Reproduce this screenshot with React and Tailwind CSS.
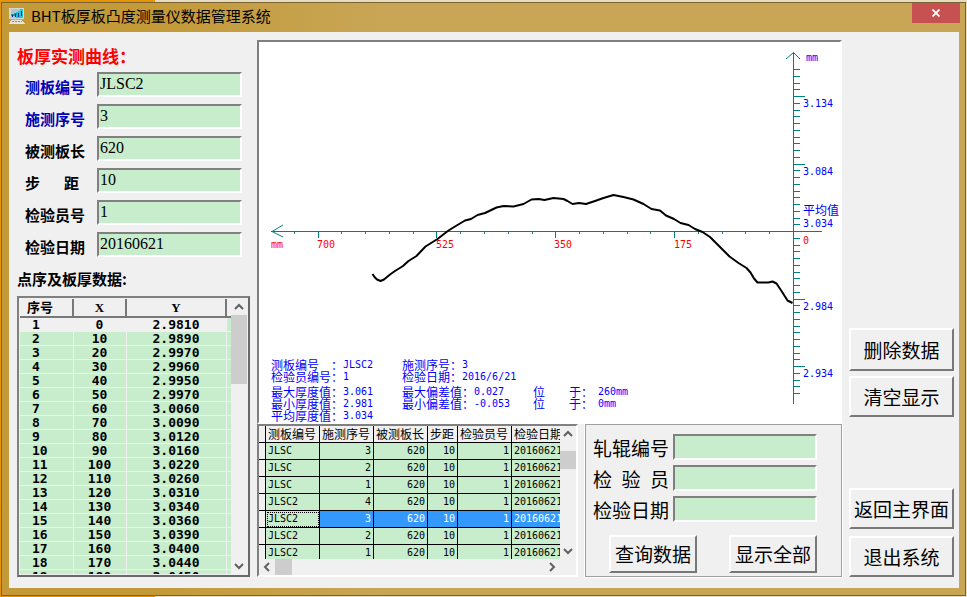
const CJK = 'font-["Noto_Sans_CJK_SC",sans-serif]';

const sunken =
  'border-2 border-t-[#808080] border-l-[#808080] border-r-white border-b-white';
const raised =
  'border-2 border-t-white border-l-white border-r-[#787878] border-b-[#787878]';

const fields = [
  { id: 'plate', label: ['测板编号'], value: 'JLSC2', blue: true },
  { id: 'seq', label: ['施测序号'], value: '3', blue: true },
  { id: 'length', label: ['被测板长'], value: '620' },
  { id: 'step', label: ['步', '距'], value: '10' },
  { id: 'inspector', label: ['检验员号'], value: '1' },
  { id: 'date', label: ['检验日期'], value: '20160621' },
];

const thickness = [
  '2.9810', '2.9890', '2.9970', '2.9960', '2.9950', '2.9970', '3.0060',
  '3.0090', '3.0120', '3.0160', '3.0220', '3.0260', '3.0310', '3.0340',
  '3.0360', '3.0390', '3.0400', '3.0440', '3.0450',
];

const records = [
  ['JLSC', 3], ['JLSC', 2], ['JLSC', 1], ['JLSC2', 4],
  ['JLSC2', 3], ['JLSC2', 2], ['JLSC2', 1],
];

const curve =
  'M372.5 274L374.5 277L377 279.5L380.5 281L384 279.5L390 274.5L395 271L403 266L408.5 261L416.5 256L425.5 246.5L437.5 239L448.5 230.5L455 226.5L465 220.5L471 219L477.5 215L485 213L496.5 207.5L503.5 206L513.5 206.5L523.5 204L531.5 199.5L538.5 199L544.5 200L553.5 198L563.5 199L567.5 201L572.5 204L579 203L586 204L595 201L603.5 198L613.5 195L623.5 197L633.5 199.5L643.5 204L651.5 209L660 210.5L666 215.5L674 219L680.5 223L688.5 225L695 229L702.5 232L710 237L720.5 247.5L729.5 256.5L738.5 263L746.5 268L750.5 272.5L754 278.5L757.5 282.5L768.5 282.5L772.5 281.5L776.5 283.5L781.5 291L787.5 300.5L792.5 303';

const yTicks = Array.from({ length: 49 }, (_, i) => i - 24).filter((k) => k !== 0);
const xTicks = Array.from({ length: 21 }, (_, i) => i + 1);

function Chevron({ dir }) {
  const d = {
    up: 'M1 7L5 3L9 7',
    down: 'M1 3L5 7L9 3',
    left: 'M7 1L3 5L7 9',
    right: 'M3 1L7 5L3 9',
  }[dir];
  return (
    <svg viewBox="0 0 10 10" className="h-[10px] w-[10px]" aria-hidden="true">
      <path d={d} fill="none" stroke="#606060" strokeWidth="2" />
    </svg>
  );
}

function VScroll({ thumb, gap }) {
  return (
    <div className="flex w-4 shrink-0 flex-col items-center bg-[#f0f0f0]">
      <button aria-label="向上" className="flex h-4 w-4 items-center justify-center"><Chevron dir="up" /></button>
      <div className={`w-full flex-1 ${gap}`}>
        <div className={`w-full bg-[#cdcdcd] ${thumb}`} />
      </div>
      <button aria-label="向下" className="flex h-4 w-4 items-center justify-center"><Chevron dir="down" /></button>
    </div>
  );
}

function TitleBar() {
  return (
    <header className="flex h-[29px] shrink-0 items-start">
      <svg viewBox="0 0 16 16" className="mt-[5px] h-4 w-4" shapeRendering="crispEdges" aria-hidden="true">
        <rect x="0" y="0" width="15" height="11" fill="#d4d8d4" />
        <rect x="2" y="1" width="12" height="9" fill="#b4c4c8" />
        <path d="M7 4H9V3H11V1H14V10H7Z" fill="#20c8d8" />
        <path d="M2 6H5V5H8V7H6V8H2Z" fill="#109cb0" />
        <path d="M3 9V7M6 9V6M9 9V5M12 8V3" stroke="#10309c" fill="none" />
        <rect x="3" y="11" width="10" height="1" fill="#a8b0b0" />
        <path d="M2 12H13L16 16H0Z" fill="#e2e6e2" />
        <path d="M3 13.5H13" stroke="#28b0b8" strokeDasharray="2 1" />
      </svg>
      <h1 className="ml-[6px] flex-1 text-[15px] leading-[26px] text-black">BHT板厚板凸度测量仪数据管理系统</h1>
      <button aria-label="关闭" className="-mr-px flex h-5 w-12 items-center justify-center bg-[#c75050]">
        <svg viewBox="0 0 8 8" className="h-2 w-2" aria-hidden="true">
          <path d="M0.5 0.5L7.5 7.5M7.5 0.5L0.5 7.5" stroke="#fff" strokeWidth="1.8" />
        </svg>
      </button>
    </header>
  );
}

function PointTable() {
  return (
    <div className="flex h-[281px] border-2 border-[#808080] border-r-[#696969] border-b-[#696969] bg-[#f0f0f0] p-px">
      <div className="flex-1 overflow-hidden">
        <table className="w-full table-fixed border-collapse font-['DejaVu_Sans_Mono','Noto_Sans_CJK_SC',monospace] text-[13px] font-bold">
          <colgroup>
            <col className="w-[53px]" /><col className="w-[53px]" /><col className="w-[100px]" /><col />
          </colgroup>
          <thead>
            <tr className="h-[18px] leading-4">
              {['序号', 'X', 'Y', ''].map((h, i) => (
                <th key={i} className="border-r-2 border-b-2 border-[#787878] p-0 text-center font-['Liberation_Serif','Noto_Sans_CJK_SC',serif] last:border-r-0">
                  <div className={i === 0 ? 'pr-3' : ''}>{h}</div>
                </th>
              ))}
            </tr>
          </thead>
          <tbody>
            {thickness.map((y, i) => (
              <tr key={y + i} className={`h-[14px] leading-[13px] ${i === 0 ? 'bg-[#f0f0f0]' : 'bg-[#c8edcc]'}`}>
                <td className="border-r border-b border-[#f0f0f0] p-0 pl-3">{i + 1}</td>
                <td className="border-r border-b border-[#f0f0f0] p-0 text-center">{i * 10}</td>
                <td className="border-r border-b border-[#f0f0f0] p-0 text-center">{y}</td>
                <td className="border-b border-[#f0f0f0] bg-[#c8edcc] p-0" />
              </tr>
            ))}
          </tbody>
        </table>
      </div>
      <VScroll gap="pt-0" thumb="h-[69px]" />
    </div>
  );
}

function LeftPanel() {
  return (
    <section className="flex w-[233px] shrink-0 flex-col pt-3">
      <h2 className="text-[17px] leading-6 font-bold text-[#ff0000]">板厚实测曲线：</h2>
      <div className="mt-1 flex flex-col gap-[7px] pr-2 pl-2">
        {fields.map((f) => (
          <div key={f.id} className="flex h-[25px] gap-3">
            <label
              htmlFor={f.id}
              className={`flex w-15 justify-between pt-[5px] text-[15px] leading-5 font-bold ${f.label.length > 1 ? 'pr-[6px]' : ''} ${f.blue ? 'text-[#0000b4]' : 'text-black'}`}
            >
              {f.label.map((t) => <span key={t}>{t}</span>)}
            </label>
            <input
              id={f.id}
              defaultValue={f.value}
              className={`min-w-0 flex-1 bg-[#c8edcc] px-px pb-[2px] font-['Liberation_Serif',serif] text-base leading-5 outline-none ${sunken}`}
            />
          </div>
        ))}
      </div>
      <h3 className="mt-3 mb-[7px] text-[15px] leading-5 font-bold text-black">点序及板厚数据:</h3>
      <PointTable />
    </section>
  );
}

function Note({ label, value }) {
  return (
    <span className="flex">
      <span className={label.length > 1 ? 'flex w-18 justify-between' : ''}>
        {label.map((t) => <span key={t}>{t}</span>)}
      </span>
      <span className="font-['DejaVu_Sans_Mono',monospace] text-[10px]">{value}</span>
    </span>
  );
}

function Place({ value }) {
  return (
    <span className="flex">
      <span className="w-9">位</span><span className="w-[29px]">于：</span>
      <span className="font-['DejaVu_Sans_Mono',monospace] text-[10px]">{value}</span>
    </span>
  );
}

function Chart() {
  return (
    <section className={`relative h-[384px] bg-white ${sunken}`}>
      <svg viewBox="259 42 581 380" className="h-full w-full" role="img" aria-label="板厚实测曲线">
        <g stroke="#008080" strokeWidth="1" fill="none" shapeRendering="crispEdges">
          <path d="M793.5 52V404M271 231.5H822" />
          {yTicks.map((k) => {
            const y = Math.round(231 + k * 6.75) + 0.5;
            return <path key={k} d={`M793 ${y}H${k % 10 === 0 ? 805 : 800}`} />;
          })}
          {xTicks.map((k) => {
            const x = Math.round(793 - k * 23.77) + 0.5;
            return <path key={k} d={`M${x} 231V${k % 5 === 0 ? 238 : 234}`} />;
          })}
        </g>
        <path d="M786 59L793.5 52.5L800 59M283 225L272 231.5L283 237" stroke="#008080" fill="none" />
        <path d={curve} fill="none" stroke="#000" strokeWidth="2" strokeLinejoin="round" />
        <g className="font-['DejaVu_Sans_Mono',monospace] text-[10px]" fill="#ff0000">
          <text x="271" y="248">mm</text>
          <text x="317" y="248">700</text>
          <text x="436" y="248">525</text>
          <text x="554" y="248">350</text>
          <text x="674" y="248">175</text>
          <text x="803" y="244">0</text>
        </g>
        <g className="font-['DejaVu_Sans_Mono',monospace] text-[10px]" fill="#0000ff">
          <text x="806" y="61">mm</text>
          <text x="803" y="107">3.134</text>
          <text x="803" y="175">3.084</text>
          <text x="803" y="215" className={`text-xs ${CJK}`}>平均值</text>
          <text x="803" y="227">3.034</text>
          <text x="803" y="310">2.984</text>
          <text x="803" y="377">2.934</text>
        </g>
      </svg>
      <div className="absolute bottom-0 left-3 grid grid-cols-[131px_131px_auto] text-xs leading-3 text-[#0000ff]">
        <Note label={['测板编号', '：']} value="JLSC2" />
        <Note label={['施测序号：']} value="3" />
        <span />
        <div className="pb-[3px]"><Note label={['检验员编号：']} value="1" /></div>
        <Note label={['检验日期：']} value="2016/6/21" />
        <span />
        <Note label={['最大厚度值：']} value="3.061" />
        <Note label={['最大偏差值：']} value="0.027" />
        <Place value="260mm" />
        <Note label={['最小厚度值：']} value="2.981" />
        <Note label={['最小偏差值：']} value="-0.053" />
        <Place value="0mm" />
        <Note label={['平均厚度值：']} value="3.034" />
      </div>
    </section>
  );
}

function RecordGrid() {
  const heads = ['测板编号', '施测序号', '被测板长', '步距', '检验员号', '检验日期'];
  return (
    <section className={`flex h-[153px] w-[321px] shrink-0 flex-col bg-[#f0f0f0] ${sunken}`}>
      <div className="flex h-[133px]">
        <div className="min-w-0 flex-1 overflow-hidden">
          <table className="w-[312px] table-fixed border-separate border-spacing-0 text-[10px]">
            <colgroup>
              <col className="w-[7px]" /><col className="w-[54px]" /><col className="w-[54px]" /><col className="w-[54px]" />
              <col className="w-[30px]" /><col className="w-[54px]" /><col className="w-[59px]" />
            </colgroup>
            <thead>
              <tr className="h-[17px] text-xs leading-4">
                <th className="border-r border-b border-black p-0" aria-label="标记" />
                {heads.map((h) => (
                  <th key={h} className="overflow-hidden border-r border-b border-black p-0 pl-[2px] text-left font-normal whitespace-nowrap">{h}</th>
                ))}
              </tr>
            </thead>
            <tbody className="font-['DejaVu_Sans_Mono',monospace]">
              {records.map(([name, seq], i) => {
                const on = i === 4;
                return (
                  <tr key={name + seq} className={`h-[17px] leading-4 ${on ? 'bg-[#3399ff] text-white' : 'bg-[#c8edcc] text-black'}`}>
                    <td className="border-r border-b border-black bg-[#f0f0f0] p-0" />
                    <td className={`border-r border-b border-black bg-[#c8edcc] p-0 pl-[2px] text-black ${on ? 'outline-1 -outline-offset-2 outline-dotted' : ''}`}>{name}</td>
                    {[seq, 620, 10, 1].map((v, j) => (
                      <td key={j} className="border-r border-b border-black p-0 pr-[2px] text-right">{v}</td>
                    ))}
                    <td className="border-b border-black p-0 pl-[2px]">20160621</td>
                  </tr>
                );
              })}
            </tbody>
          </table>
        </div>
        <VScroll gap="pt-[9px]" thumb="h-[18px]" />
      </div>
      <div className="mr-4 flex flex-1 items-center">
        <button aria-label="向左" className="flex h-4 w-4 items-center justify-center"><Chevron dir="left" /></button>
        <div className="h-4 flex-1"><div className="h-full w-[17px] bg-[#cdcdcd]" /></div>
        <button aria-label="向右" className="flex h-4 w-4 items-center justify-center"><Chevron dir="right" /></button>
      </div>
    </section>
  );
}

function Action({ children, className }) {
  return (
    <button type="button" className={`flex items-center justify-center bg-[#f0f0f0] text-[19px] leading-6 whitespace-nowrap text-black ${raised} ${className}`}>
      {children}
    </button>
  );
}

function QueryPanel() {
  const rows = [
    { id: 'q-roll', label: ['轧辊编号'] },
    { id: 'q-inspector', label: ['检', '验', '员'] },
    { id: 'q-date', label: ['检验日期'] },
  ];
  return (
    <form className="ml-[7px] flex h-[153px] min-w-0 flex-1 flex-col justify-between border border-[#a0a0a0] pt-[9px] pr-6 pb-[3px] pl-[7px] outline-1 outline-white">
      <div className="flex flex-col gap-[5px]">
        {rows.map((r) => (
          <div key={r.id} className="flex h-[26px] gap-1">
            <label htmlFor={r.id} className="flex w-[76px] justify-between pt-[2px] text-[19px] leading-6 text-black">
              {r.label.map((t) => <span key={t}>{t}</span>)}
            </label>
            <input id={r.id} className={`min-w-0 flex-1 bg-[#c8edcc] px-1 outline-none ${sunken}`} />
          </div>
        ))}
      </div>
      <div className="flex justify-between pl-4">
        <Action className="h-[38px] w-[88px]">查询数据</Action>
        <Action className="h-[38px] w-[88px]">显示全部</Action>
      </div>
    </form>
  );
}

export default function App() {
  return (
    <div className={`flex min-h-screen bg-linear-to-r from-[#e89400] from-16% to-[#e6dcc0] to-16% pt-[2px] pr-px pb-px pl-px text-black ${CJK}`}>
      <div className="flex min-w-0 flex-1 flex-col border border-[#7a6330] bg-linear-to-r from-[#c49a38] from-16% to-[#c8a656] to-40% pr-[6px] pb-[7px] pl-[7px]">
        <TitleBar />
        <main className="flex flex-1 items-stretch bg-[#f0f0f0] pb-[11px] pl-2">
          <LeftPanel />
          <section className="ml-[7px] flex min-w-0 flex-1 flex-col pt-2">
            <Chart />
            <div className="flex">
              <RecordGrid />
              <QueryPanel />
            </div>
          </section>
          <nav className="mr-[5px] ml-[7px] flex w-[105px] shrink-0 flex-col justify-end">
            <Action className="h-[43px]">删除数据</Action>
            <Action className="mt-[5px] h-[41px]">清空显示</Action>
            <Action className="mt-[71px] h-[41px]">返回主界面</Action>
            <Action className="mt-[7px] h-[41px]">退出系统</Action>
          </nav>
        </main>
      </div>
    </div>
  );
}
